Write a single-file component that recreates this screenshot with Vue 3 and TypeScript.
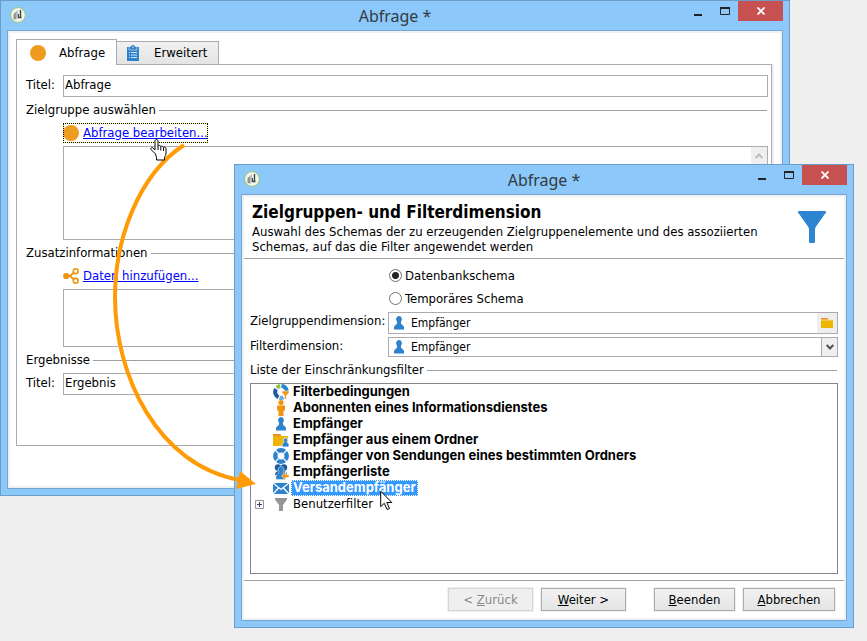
<script setup lang="ts">
import { ref } from 'vue'

interface FilterEntry {
  id: string
  label: string
  icon: string
  bold: boolean
  expandable?: boolean
}

const titel = ref('Abfrage')
const ergebnisTitel = ref('Ergebnis')
const schema = ref('db')
const zieldimension = ref('Empfänger')
const filterdimension = ref('Empfänger')
const selected = ref('versand')

const entries: FilterEntry[] = [
  { id: 'filter', label: 'Filterbedingungen', icon: 'ring-filter', bold: true },
  { id: 'abo', label: 'Abonnenten eines Informationsdienstes', icon: 'person', bold: true },
  { id: 'empf', label: 'Empfänger', icon: 'pawn', bold: true },
  { id: 'ordner', label: 'Empfänger aus einem Ordner', icon: 'folder', bold: true },
  { id: 'sendung', label: 'Empfänger von Sendungen eines bestimmten Ordners', icon: 'ring', bold: true },
  { id: 'liste', label: 'Empfängerliste', icon: 'group', bold: true },
  { id: 'versand', label: 'Versandempfänger', icon: 'mail', bold: true },
  { id: 'benutzer', label: 'Benutzerfilter', icon: 'funnel', bold: false, expandable: true },
]
</script>

<template>
  <main class="desktop">
    <section class="window window-back" aria-label="Abfrage">
      <header class="titlebar">
        <svg class="logo" viewBox="0 0 16 16" width="16" height="16">
          <circle cx="8" cy="8" r="7.4" fill="#f4f5f2" stroke="#9cc36a" />
          <path d="M3.5 12V7L6 5v7.5z" fill="#8d9291" />
          <path d="M5.500 5l2.500-2v8L6 12.500z" fill="#b9bdbb" />
          <path d="M10.500 3v7.500M8 10.500h3.500" stroke="#3d4240" stroke-width="1.400" fill="none" />
          <path d="M8.500 7v3.500" stroke="#3d4240" fill="none" />
        </svg>
        <h1>Abfrage *</h1>
        <div class="controls">
          <button type="button" class="ctl ctl-min" aria-label="Minimieren"><svg width="8" height="10" viewBox="0 0 8 10"><path d="M0 8h8v2H0z" fill="#222" /></svg></button>
          <button type="button" class="ctl ctl-max" aria-label="Maximieren"><svg width="10" height="8" viewBox="0 0 10 8"><path d="M.5 1v6.500h9V1" fill="none" stroke="#222" /><path d="M0 0h10v2H0z" fill="#222" /></svg></button>
          <button type="button" class="ctl ctl-close" aria-label="Schließen"><svg width="8" height="8" viewBox="0 0 8 8"><path d="M.5.5l7 7M7.500.5l-7 7" stroke="#fff" stroke-width="1.800" /></svg></button>
        </div>
      </header>
      <div class="client client-back">
        <div class="tabs" role="tablist">
          <button type="button" class="tab tab-active" role="tab" aria-selected="true">
            <svg width="16" height="16" viewBox="0 0 16 16"><circle cx="8" cy="8" r="8" fill="#ee9c1f" /></svg>
            <span>Abfrage</span>
          </button>
          <button type="button" class="tab" role="tab" aria-selected="false">
            <svg width="16" height="16" viewBox="0 0 16 16">
              <path d="M2 2h12v14H2z" fill="#2d82cc" />
              <path d="M4 1.500h2a2 2 0 0 1 4 0h2V5H4z" fill="#2d82cc" stroke="#e9e9e9" stroke-width=".6" />
              <circle cx="8" cy="2" r=".8" fill="#e9e9e9" />
              <path d="M4 7.500h1M6 7.500h6M4 10h1M6 10h6M4 12.500h1M6 12.500h6" stroke="#d6e8f7" />
            </svg>
            <span>Erweitert</span>
          </button>
        </div>
        <form class="panel" @submit.prevent>
          <div class="row">
            <label for="titel">Titel:</label>
            <input id="titel" v-model="titel" type="text">
          </div>
          <h2 class="group">Zielgruppe auswählen</h2>
          <a class="link link-focus" href="#abfrage">
            <svg width="16" height="16" viewBox="0 0 16 16"><circle cx="8" cy="8" r="8" fill="#ee9c1f" /></svg>
            <span>Abfrage bearbeiten...</span>
          </a>
          <div class="memo memo-tall">
            <textarea aria-label="Zielgruppe"></textarea>
            <span class="scroller"><svg width="8" height="6" viewBox="0 0 8 6"><path d="M.7 5L4 1.500 7.300 5" fill="none" stroke="#b4b4b4" stroke-width="1.800" /></svg></span>
          </div>
          <h2 class="group">Zusatzinformationen</h2>
          <a class="link" href="#daten">
            <svg width="16" height="16" viewBox="0 0 16 16">
              <path d="M3 8h4l5.500-4.800M7 8l5.500 4.800" fill="none" stroke="#ee930c" stroke-width="1.800" />
              <circle cx="3.200" cy="8" r="3.100" fill="#ee930c" />
              <circle cx="12.700" cy="3.200" r="2.400" fill="#fff" stroke="#ee930c" stroke-width="1.600" />
              <circle cx="12.700" cy="12.800" r="2.400" fill="#fff" stroke="#ee930c" stroke-width="1.600" />
            </svg>
            <span>Daten hinzufügen...</span>
          </a>
          <div class="memo memo-short"><textarea aria-label="Zusatzinformationen"></textarea></div>
          <h2 class="group">Ergebnisse</h2>
          <div class="row">
            <label for="ergebnis">Titel:</label>
            <input id="ergebnis" v-model="ergebnisTitel" type="text">
          </div>
        </form>
      </div>
    </section>

    <section class="window window-front" aria-label="Zielgruppen- und Filterdimension">
      <header class="titlebar">
        <svg class="logo" viewBox="0 0 16 16" width="16" height="16">
          <circle cx="8" cy="8" r="7.4" fill="#f4f5f2" stroke="#9cc36a" />
          <path d="M3.5 12V7L6 5v7.5z" fill="#8d9291" />
          <path d="M5.500 5l2.500-2v8L6 12.500z" fill="#b9bdbb" />
          <path d="M10.500 3v7.500M8 10.500h3.500" stroke="#3d4240" stroke-width="1.400" fill="none" />
          <path d="M8.500 7v3.500" stroke="#3d4240" fill="none" />
        </svg>
        <h1>Abfrage *</h1>
        <div class="controls">
          <button type="button" class="ctl ctl-min" aria-label="Minimieren"><svg width="8" height="10" viewBox="0 0 8 10"><path d="M0 8h8v2H0z" fill="#222" /></svg></button>
          <button type="button" class="ctl ctl-max" aria-label="Maximieren"><svg width="10" height="8" viewBox="0 0 10 8"><path d="M.5 1v6.500h9V1" fill="none" stroke="#222" /><path d="M0 0h10v2H0z" fill="#222" /></svg></button>
          <button type="button" class="ctl ctl-close" aria-label="Schließen"><svg width="8" height="8" viewBox="0 0 8 8"><path d="M.5.5l7 7M7.500.5l-7 7" stroke="#fff" stroke-width="1.800" /></svg></button>
        </div>
      </header>
      <form class="client client-front" @submit.prevent>
        <div class="intro">
          <div class="intro-text">
            <h2>Zielgruppen- und Filterdimension</h2>
            <p>Auswahl des Schemas der zu erzeugenden Zielgruppenelemente und des assoziierten Schemas, auf das die Filter angewendet werden</p>
          </div>
          <svg width="28" height="32" viewBox="0 0 28 32"><path d="M1 0h26q1 0 1 1t-1.500 2.500L18 15.500q-1 1.500-1 3V31q0 1-1 1h-4q-1 0-1-1V18.500q0-1.500-1-3L1.500 3.500Q0 2 0 1t1-1z" fill="#2d84d0" /></svg>
        </div>
        <div class="settings">
          <div class="radios">
            <label><input v-model="schema" type="radio" name="schema" value="db">Datenbankschema</label>
            <label><input v-model="schema" type="radio" name="schema" value="temp">Temporäres Schema</label>
          </div>
          <div class="fields">
            <div class="field">
              <label for="ziel">Zielgruppendimension:</label>
              <div class="picker picker-tall">
                <svg class="pawn" width="16" height="16" viewBox="0 0 16 16"><path d="M8 1a3 3.200 0 0 1 2.200 5.300C9.500 7.500 9.800 9.300 12 10.500c1 .6 1 1.500 1 4H3c0-2.500 0-3.400 1-4C6.200 9.300 6.500 7.500 5.800 6.300A3 3.200 0 0 1 8 1z" fill="#2d82cc" /></svg>
                <input id="ziel" v-model="zieldimension" type="text">
                <button type="button" class="browse" aria-label="Ordner wählen"><svg width="12" height="12" viewBox="0 0 12 12"><path d="M0 1h7v2H0z" fill="#e8912a" /><path d="M0 3h12v8H0z" fill="#edb500" /><path d="M0 3h12" stroke="#f7d9a8" /></svg></button>
              </div>
            </div>
            <div class="field">
              <label for="filterdim">Filterdimension:</label>
              <div class="picker">
                <svg class="pawn" width="16" height="16" viewBox="0 0 16 16"><path d="M8 1a3 3.200 0 0 1 2.200 5.300C9.500 7.500 9.800 9.300 12 10.500c1 .6 1 1.500 1 4H3c0-2.500 0-3.400 1-4C6.200 9.300 6.500 7.500 5.800 6.300A3 3.200 0 0 1 8 1z" fill="#2d82cc" /></svg>
                <select id="filterdim" v-model="filterdimension"><option>Empfänger</option></select>
                <span class="arrow"><svg width="8" height="6" viewBox="0 0 8 6"><path d="M.7 1L4 4.500 7.300 1" fill="none" stroke="#505050" stroke-width="2" /></svg></span>
              </div>
            </div>
          </div>
          <h3 class="group">Liste der Einschränkungsfilter</h3>
          <ul class="tree" role="tree" aria-label="Liste der Einschränkungsfilter">
            <li
              v-for="e in entries"
              :key="e.id"
              role="treeitem"
              :aria-selected="selected === e.id"
              :class="{ bold: e.bold, selected: selected === e.id }"
              @click="selected = e.id"
            >
              <span class="twist">
                <button v-if="e.expandable" type="button" aria-label="Aufklappen"><svg width="9" height="9" viewBox="0 0 9 9"><path d="M.5.5h8v8h-8z" fill="#fafafa" stroke="#969696" /><path d="M2 4.500h5M4.500 2v5" stroke="#33446e" /></svg></button>
              </span>
              <svg class="icon" width="16" height="16" viewBox="0 0 16 16">
                <template v-if="e.icon === 'ring-filter'">
                  <g fill="none" stroke-width="4">
                    <path d="M3.900 3.700A5.900 5.900 0 0 1 7.300 2.100" stroke="#8cc63f" />
                    <path d="M8.500 2.100A5.900 5.900 0 0 1 13.800 7" stroke="#2d82cc" />
                    <path d="M3 5A5.900 5.900 0 0 0 5.500 13.300" stroke="#1f5c9d" />
                    <path d="M6.500 13.700A5.900 5.900 0 0 0 10.500 13.400" stroke="#6ba9de" />
                  </g>
                  <path d="M9 7h7v1.500L13.500 11.500V15h-2v-3.500L9 8.500z" fill="#f0930f" stroke="#fff" stroke-width=".5" />
                </template>
                <template v-else-if="e.icon === 'person'">
                  <circle cx="8" cy="2.600" r="2.600" fill="#f0930f" />
                  <path d="M4 5.500h8v5h-1.500V16h-5v-5.500H4z" fill="#f0930f" />
                </template>
                <path v-else-if="e.icon === 'pawn'" d="M8 1a3 3.200 0 0 1 2.200 5.300C9.500 7.500 9.800 9.300 12 10.500c1 .6 1 1.500 1 4H3c0-2.500 0-3.400 1-4C6.200 9.300 6.500 7.500 5.800 6.300A3 3.200 0 0 1 8 1z" fill="#2d82cc" />
                <template v-else-if="e.icon === 'folder'">
                  <path d="M0 2h8v2H0z" fill="#e8912a" />
                  <path d="M0 4h15v10H0z" fill="#edb500" />
                  <path d="M12.500 6a2 2 0 0 1 1.500 3.500c-.2 1.500 2 1.500 2 3V15H9v-2.500c0-1.500 2.200-1.500 2-3A2 2 0 0 1 12.500 6z" fill="#2d82cc" stroke="#fff" stroke-width=".8" />
                </template>
                <g v-else-if="e.icon === 'ring'" fill="none">
                  <circle cx="8" cy="8" r="5.700" stroke="#2d82cc" stroke-width="4.500" />
                  <path d="M2 2l3.500 3.500M14 2l-3.500 3.500M2 14l3.500-3.500M14 14l-3.500-3.500" stroke="#fff" stroke-width="1.300" />
                </g>
                <template v-else-if="e.icon === 'group'">
                  <circle cx="5" cy="3.500" r="3.200" fill="#1f5c9d" />
                  <circle cx="11" cy="3.500" r="3.200" fill="#1f5c9d" />
                  <path d="M2 11q0-3 3-4h6q3 1 3 3v1z" fill="#1f5c9d" />
                  <path d="M8 2.500a3 3 0 0 1 2 5.200c0 2.300 3 2 3 4.800v3H3v-3c0-2.800 3-2.500 3-4.800a3 3 0 0 1 2-5.200z" fill="#2d82cc" stroke="#cfe4f6" stroke-width=".6" />
                  <path d="M8.500 12l4-4v2.500H16v3h-3.500V16z" fill="#f0930f" stroke="#fff" stroke-width=".6" />
                </template>
                <template v-else-if="e.icon === 'mail'">
                  <path d="M0 3h16v11H0z" fill="#2d82cc" />
                  <path d="M0 3l8 6.500L16 3M0 14l5.500-6M16 14l-5.500-6" fill="none" stroke="#fff" stroke-width="1.300" />
                </template>
                <path v-else d="M2 2h12v1.500L10 9v6H6V9L2 3.500z" fill="#969696" />
              </svg>
              <span class="caption">{{ e.label }}</span>
            </li>
          </ul>
        </div>
        <footer class="actions">
          <button type="button" class="btn" disabled>&lt; <u>Z</u>urück</button>
          <button type="button" class="btn"><u>W</u>eiter &gt;</button>
          <span class="gap"></span>
          <button type="button" class="btn btn-narrow"><u>B</u>eenden</button>
          <button type="button" class="btn btn-wide"><u>A</u>bbrechen</button>
        </footer>
      </form>
    </section>

    <svg class="flow" width="270" height="520" viewBox="0 0 270 520" aria-hidden="true">
      <path d="M184 145C138 175 115 240 115 297C115 375 157 465 240 480" fill="none" stroke="#ff9c05" stroke-width="4" />
      <path d="M240 471l16 13-20 5z" fill="#ff9c05" />
    </svg>
    <svg class="hand" width="18" height="22" viewBox="0 0 18 22" aria-hidden="true">
      <path d="M5.500 15L1 10.500C0 9 2 8 3.200 9.200L5 11V2c0-2 3-2 3 0v5c.5-1 2.700-.7 2.800.7.700-.8 2.500-.5 2.700.8.800-.7 2.500-.3 2.500 1.200V14c0 2-1 3-1.500 4.500V21H6.500v-2.500z" fill="#fff" stroke="#000" />
      <path d="M8 7v4M10.800 8v3.500M13.500 9v3" stroke="#000" fill="none" />
    </svg>
    <svg class="pointer" width="13" height="21" viewBox="0 0 13 21" aria-hidden="true">
      <path d="M.7 1.200v15.500l3.600-3.400 2.800 6.200 2.400-1-2.700-6h5z" fill="#fff" stroke="#000" />
    </svg>
  </main>
</template>

<style>
body {
  background: #efefef;
}
</style>

<style scoped>
.desktop {
  position: relative;
  min-height: 100vh;
  overflow: hidden;
  font: 13px/16px "DejaVu Sans Condensed", "DejaVu Sans", sans-serif;
  color: #000;
}
.desktop * { box-sizing: border-box; }
h1, h2, h3, p, ul { margin: 0; padding: 0; font-weight: normal; font-size: inherit; }
button, input, select, textarea { font: inherit; color: inherit; margin: 0; padding: 0; border: 0; border-radius: 0; outline: 0; }
svg { display: block; flex: none; }

.window {
  position: absolute;
  display: flex;
  flex-direction: column;
  padding: 0 6px 6px;
  border: 1px solid #6d9cc6;
  background: #8dc8fa;
}
.window-back { left: 0; top: 0; width: 790px; height: 496px; }
.window-front { left: 234px; top: 164px; width: 620px; height: 464px; }

.titlebar {
  display: grid;
  grid-template-columns: 116px 1fr 116px;
  height: 29px;
}
.logo { margin: 6px 3px; }
.titlebar h1 { text-align: center; font: 16px/30px "Noto Sans", sans-serif; color: #333a40; }
.controls { display: flex; justify-content: flex-end; align-items: flex-start; }
.ctl { display: flex; align-items: center; justify-content: center; height: 20px; background: none; }
.ctl-min, .ctl-max { width: 27px; }
.ctl-close { width: 45px; background: #c75050; }

.client {
  flex: 1;
  display: flex;
  flex-direction: column;
  border: 1px solid #74a7d8;
  background: #fff;
  box-shadow: inset 0 0 0 2px #f1f1f1;
}
.client-back { padding: 8px 10px 42px 8px; }

.tabs { position: relative; z-index: 1; display: flex; align-items: flex-end; height: 26px; margin-bottom: -1px; }
.tab {
  display: flex;
  align-items: center;
  gap: 13px;
  width: 102px;
  height: 24px;
  padding: 0 0 1px 8px;
  border: 1px solid #acacb0;
  border-left: 0;
  background: linear-gradient(#f1f1f1, #e4e4e4);
}
.tab-active {
  width: 101px;
  height: 26px;
  padding-left: 13px;
  padding-bottom: 0;
  border-left: 1px solid #acacb0;
  border-bottom: 0;
  background: #fff;
}
.panel {
  flex: 1;
  display: flex;
  flex-direction: column;
  padding: 10px 3px 0 9px;
  border: 1px solid #acacb0;
  box-shadow: 2px 0 0 #efefef;
}

.row { display: grid; grid-template-columns: 37px 1fr; height: 22px; }
.row label { line-height: 20px; }
.row input { border: 1px solid #acacb0; padding: 0 0 2px 1px; background: #fff; }

.group {
  display: flex;
  align-items: center;
  gap: 3px;
  height: 17px;
  margin: 4px 0 5px;
  padding-right: 1px;
}
.group::after { content: ""; flex: 1; height: 1px; margin-top: 2px; background: #a0a0a0; }

.link {
  display: flex;
  align-items: center;
  align-self: flex-start;
  gap: 4px;
  height: 20px;
  margin: 0 0 3px 37px;
  color: #00f;
  text-decoration: none;
}
.link span { text-decoration: underline; padding-bottom: 1px; }
.link-focus { outline: 1px dotted #000; outline-offset: -1px; box-shadow: inset 0 0 0 1px #ffff55; }

.memo { display: flex; margin-left: 37px; border: 1px solid #acacb0; }
.memo-tall { height: 94px; }
.memo-short { height: 58px; }
.memo textarea { flex: 1; resize: none; background: #fff; }
.scroller { display: flex; justify-content: center; width: 16px; padding-top: 6px; background: #efefef; }

.client-front { padding: 2px; }
.intro {
  display: flex;
  justify-content: space-between;
  height: 62px;
  padding: 6px 18px 0 8px;
  border-bottom: 1px solid #a0a0a0;
}
.intro-text { width: 520px; }
.intro h2 { font-size: 17px; line-height: 18px; font-weight: bold; margin-bottom: 3px; }
.intro p { font-size: 13px; line-height: 15px; }
.intro svg { margin-top: 8px; }

.settings { flex: 1; display: flex; flex-direction: column; padding: 5px 6px 0 6px; }
.radios { display: flex; flex-direction: column; margin: 0 0 2px 139px; }
.radios label { display: flex; align-items: center; gap: 3px; height: 23px; }
.radios input { appearance: none; width: 13px; height: 13px; border: 1px solid #707070; border-radius: 50%; background: #fff; }
.radios input:checked { background: radial-gradient(circle, #222 0 3px, #fff 4px); }

.fields { display: flex; flex-direction: column; gap: 3px; }
.field { display: grid; grid-template-columns: 138px 1fr; }
.field label { line-height: 18px; }
.picker { display: flex; align-items: center; height: 20px; border: 1px solid #acacb0; background: #fff; font-size: 12px; }
.picker-tall { height: 22px; }
.pawn { margin: 0 4px 0 2px; }
.picker input, .picker select { flex: 1; min-width: 0; height: 100%; background: none; appearance: none; }
.browse { display: flex; align-items: center; justify-content: center; width: 20px; height: 100%; background: #eee; }
.arrow { display: flex; align-items: center; justify-content: center; width: 16px; height: 100%; border-left: 1px solid #acacb0; background: #efefef; }

.tree { flex: 1; list-style: none; border: 1px solid #828790; }
.tree li { display: flex; align-items: center; height: 16px; }
.twist { display: flex; width: 22px; padding-left: 4px; }
.twist button { background: none; }
.caption { margin-left: 2px; padding: 0 2px 1px; line-height: 15px; }
.bold .caption { font-family: Inter, sans-serif; font-weight: bold; }
.selected .caption { color: #fff; background: #3399ff; outline: 1px dotted #fff; outline-offset: -1px; }

.actions {
  display: flex;
  gap: 8px;
  height: 38px;
  margin-top: 6px;
  padding: 7px 9px 0 0;
  justify-content: flex-end;
  border-top: 1px solid #a0a0a0;
}
.btn {
  width: 85px;
  height: 23px;
  border: 1px solid #acacac;
  background: linear-gradient(#f2f2f2, #e4e4e4);
  box-shadow: 0 0 0 1px #f0f0f0;
  line-height: 20px;
}
.btn:disabled { border-color: #d5d5d5; background: #efefef; color: #888; }
.btn-narrow { width: 81px; }
.btn-wide { width: 92px; }
.gap { width: 12px; }

.flow { position: absolute; left: 0; top: 0; pointer-events: none; }
.hand { position: absolute; left: 150px; top: 139px; }
.pointer { position: absolute; left: 380px; top: 490px; }
</style>
